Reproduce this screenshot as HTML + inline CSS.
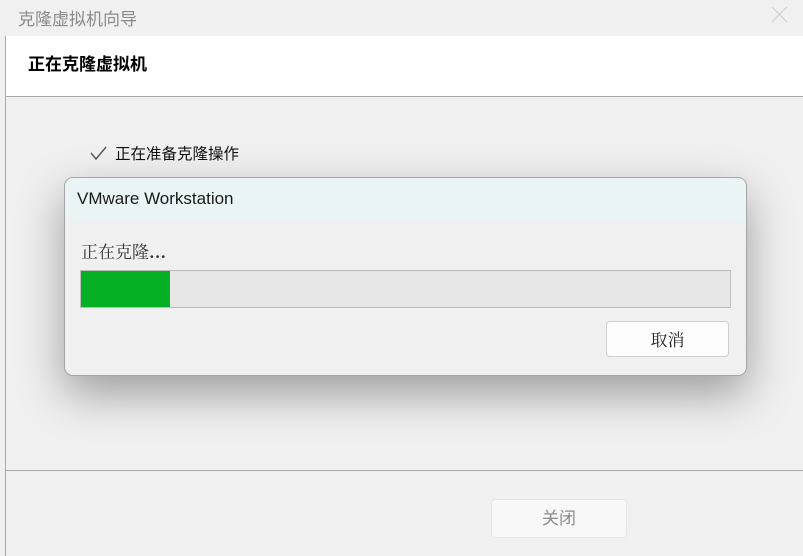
<!DOCTYPE html>
<html><head><meta charset="utf-8"><style>
*{margin:0;padding:0;box-sizing:border-box}
body{width:803px;height:556px;background:#f0f0f0;position:relative;overflow:hidden;font-family:"Liberation Sans","Noto Sans CJK SC",sans-serif}
.a{position:absolute}
</style></head><body>
<div class="a" style="left:5px;top:36px;width:1px;height:520px;background:#a8a8a8"></div>
<div class="a" style="left:18px;top:5px;font-size:17px;color:#8a8a8a">克隆虚拟机向导</div>
<svg class="a" style="left:771px;top:6px" width="17" height="17"><path d="M1 1L16 16M16 1L1 16" stroke="#d0d0d0" stroke-width="1.2"/></svg>
<div class="a" style="left:6px;top:36px;width:797px;height:60px;background:#fff"></div>
<div class="a" style="left:6px;top:96px;width:797px;height:1px;background:#a8a8a8"></div>
<div class="a" style="left:28px;top:50px;font-size:17px;font-weight:bold;color:#000">正在克隆虚拟机</div>
<svg class="a" style="left:90px;top:145px" width="18" height="16"><path d="M1 8L6 14L16 2" stroke="#555" stroke-width="1.4" fill="none"/></svg>
<div class="a" style="left:115px;top:142px;font-size:15.5px;color:#111">正在准备克隆操作</div>
<div class="a" style="left:6px;top:470px;width:797px;height:1px;background:#a8a8a8"></div>
<div class="a" style="left:491px;top:499px;width:136px;height:39px;background:#f8f8f8;border:1px solid #e6e6e6;border-radius:4px;text-align:center;line-height:37px;font-size:17px;color:#8a8a8a">关闭</div>
<div class="a" style="left:64px;top:177px;width:683px;height:199px;background:#f0f0f0;border:1px solid #a5a5a5;border-radius:9px;box-shadow:0 18px 45px rgba(0,0,0,0.35);overflow:hidden">
 <div style="height:43px;background:#eaf4f7;padding:11px 0 0 12px;font-size:17px;color:#1a1a1a">VMware Workstation</div>
 <div class="a" style="left:16px;top:60px;font-size:17px;color:#333;font-family:'Noto Serif CJK SC',serif">正在克隆<b>...</b></div>
 <div class="a" style="left:15px;top:92px;width:651px;height:38px;background:#e6e6e6;border:1px solid #bcbcbc">
  <div style="width:89px;height:36px;background:#06b025"></div>
 </div>
 <div class="a" style="left:541px;top:143px;width:123px;height:36px;background:#fdfdfd;border:1px solid #cfcfcf;border-radius:4px;text-align:center;line-height:34px;font-size:17px;color:#222;font-family:'Noto Serif CJK SC',serif">取消</div>
</div>
</body></html>
